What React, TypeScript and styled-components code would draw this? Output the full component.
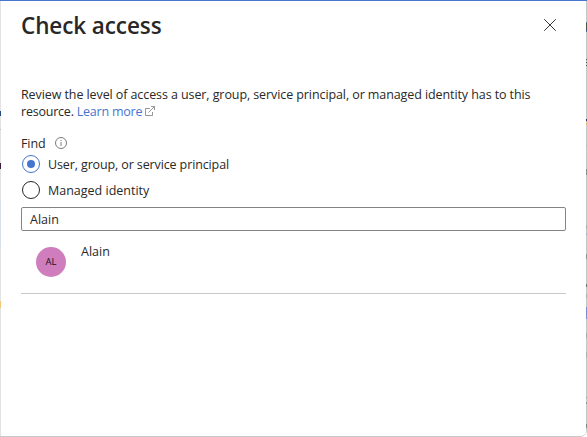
import React from "react";
import styled, { createGlobalStyle } from "styled-components";

const Global = createGlobalStyle`
  * { box-sizing: border-box; }
  body { margin: 0; background: #fff; font-family: "Open Sans", "Noto Sans", sans-serif; color: #292827; }
`;

const Page = styled.div`
  display: grid;
  grid-template-columns: 1px 1fr 1px;
  width: 587px;
  height: 437px;
  border-top: 1px solid #4675d0;
  border-bottom: 1px solid #c8c8c8;
  border-bottom-right-radius: 7px;
  overflow: hidden;
`;

const LeftEdge = styled.div`
  background: linear-gradient(
    #e3e3e3 0 110px, #284a80 110px 115px, #e3e3e3 115px 128px, #c0c0c0 128px 129px,
    #e3e3e3 129px 162px, #3c1a3c 162px 168px, #e3e3e3 168px 199px, #d9deeb 199px 248px,
    #e3e3e3 248px 300px, #ecc878 300px 307px, #e3e3e3 307px
  );
`;

const RightEdge = styled.div`
  background: linear-gradient(
    #c8c8c8 0 21px, #4675d0 21px 22px, #505050 22px 30px, #4675d0 30px 31px,
    #c8c8c8 31px 58px, #505050 58px 59px, #c8c8c8 59px 61px, #505050 61px 62px,
    #c8c8c8 62px 64px, #505050 64px 65px, #c8c8c8 65px 118px, #34306b 118px 120px,
    #d7c08d 120px 124px, #c8c8c8 124px 144px, #b0b0b0 144px 145px,
    #c8c8c8 145px 168px, #8b8b8b 168px 174px, #c8c8c8 174px 224px, #b1b1b1 224px 228px,
    #c8c8c8 228px 232px, #aaa9c5 232px 234px, #c8c8c8 234px 253px, #91909e 253px 258px,
    #c8c8c8 258px 283px, #707070 283px 286px, #c8c8c8 286px 293px, #b0b0b0 293px 297px,
    #c8c8c8 297px 306px, #7d8cc8 306px 318px, #c8c8c8 318px 332px, #aaa 332px 337px,
    #c8c8c8 337px 351px, #b0b0b0 351px 357px, #c8c8c8 357px 396px, #999 396px 397px,
    #c8c8c8 397px 401px, #999 401px 403px, #c8c8c8 403px 423px, #858585 423px 427px, #c8c8c8 427px
  );
`;

const Panel = styled.main`
  display: flex;
  flex-direction: column;
  padding: 0 20px;
  background: #fff;
  border-bottom-right-radius: 6px;
`;

const Header = styled.header`
  display: flex;
  justify-content: space-between;
  height: 85px;
  padding: 9px 9px 0 0;
`;

const Title = styled.h1`
  margin: 0;
  font-size: 22.5px;
  line-height: 32px;
  font-weight: 600;
  letter-spacing: -0.1px;
  white-space: nowrap;
`;

const CloseButton = styled.button`
  display: flex;
  height: 14px;
  margin-top: 8px;
  padding: 0;
  border: 0;
  background: none;
`;

const Text = styled.span<{ $spacing?: number }>`
  font-size: 12.5px;
  line-height: 17px;
  letter-spacing: ${(p) => p.$spacing ?? -0.09}px;
  white-space: nowrap;
`;

const Line = styled.div<{ $height: number; $gap?: number }>`
  display: flex;
  align-items: center;
  height: ${(p) => p.$height}px;
  gap: ${(p) => p.$gap ?? 0}px;
`;

const Link = styled.a`
  display: flex;
  align-items: center;
  gap: 3px;
  color: #4675d0;
  margin-left: 3px;
`;

const FindRow = styled(Line)`
  margin-top: 15px;
`;

const RadioDot = styled.span<{ $checked?: boolean }>`
  display: grid;
  place-items: center;
  width: 18px;
  height: 18px;
  border: 1px solid ${(p) => (p.$checked ? "#4675d0" : "#292827")};
  border-radius: 50%;
  &::after {
    content: "";
    width: 8px;
    height: 8px;
    border-radius: 50%;
    background: ${(p) => (p.$checked ? "#4675d0" : "transparent")};
  }
`;

const RadioRow = styled.label`
  display: flex;
  align-items: center;
  gap: 8px;
  height: 26px;
  padding-left: 1px;
`;

const SearchBox = styled.div`
  display: flex;
  align-items: center;
  height: 24px;
  margin-top: 4px;
  padding-left: 8px;
  border: 1px solid #858482;
  border-radius: 2px;
`;

const Result = styled.div`
  display: flex;
  gap: 15px;
  height: 63px;
  padding: 12px 0 0 15px;
  border-bottom: 1px solid #c8c8c8;
`;

const Avatar = styled.span`
  display: grid;
  place-items: center;
  width: 30px;
  height: 30px;
  margin-top: 4px;
  border-radius: 50%;
  background: #cf7dbd;
  color: #16101a;
  font-size: 9.5px;
  line-height: 12px;
`;

const CloseIcon = () => (
  <svg width="14" height="14" viewBox="0 0 14 14" fill="none" stroke="#3b3a39" strokeWidth="1">
    <path d="M1.2 1.2 12.8 12.8M12.8 1.2 1.2 12.8" />
  </svg>
);

const ExternalIcon = () => (
  <svg width="11" height="13" viewBox="0 0 11 13" fill="none" stroke="#858381" strokeWidth="0.85">
    <path d="M5 3.5H.5v7h7V7M3.5 7.5 9.2 1.8M6 1.5h3.5V5" />
  </svg>
);

const InfoIcon = () => (
  <svg width="12" height="12" viewBox="0 0 12 12" fill="none" stroke="#6f6d6b">
    <circle cx="6" cy="6" r="5.5" strokeWidth="0.9" />
    <path d="M6 5v4M6 3v1" strokeWidth="0.9" />
  </svg>
);

export default function App() {
  return (
    <>
      <Global />
      <Page>
        <LeftEdge />
        <Panel>
          <Header>
            <Title>Check access</Title>
            <CloseButton aria-label="Close"><CloseIcon /></CloseButton>
          </Header>
          <Line $height={17}>
            <Text>Review the level of access a user, group, service principal, or managed identity has to this</Text>
          </Line>
          <Line $height={17}>
            <Text $spacing={-0.22}>resource.</Text>
            <Link><Text $spacing={-0.22}>Learn more</Text><ExternalIcon /></Link>
          </Line>
          <FindRow $height={16} $gap={9}>
            <Text>Find</Text>
            <InfoIcon />
          </FindRow>
          <RadioRow><RadioDot $checked /><Text $spacing={-0.12}>User, group, or service principal</Text></RadioRow>
          <RadioRow><RadioDot /><Text $spacing={0}>Managed identity</Text></RadioRow>
          <SearchBox><Text $spacing={0}>Alain</Text></SearchBox>
          <Result>
            <Avatar>AL</Avatar>
            <Text $spacing={0}>Alain</Text>
          </Result>
        </Panel>
        <RightEdge />
      </Page>
    </>
  );
}
